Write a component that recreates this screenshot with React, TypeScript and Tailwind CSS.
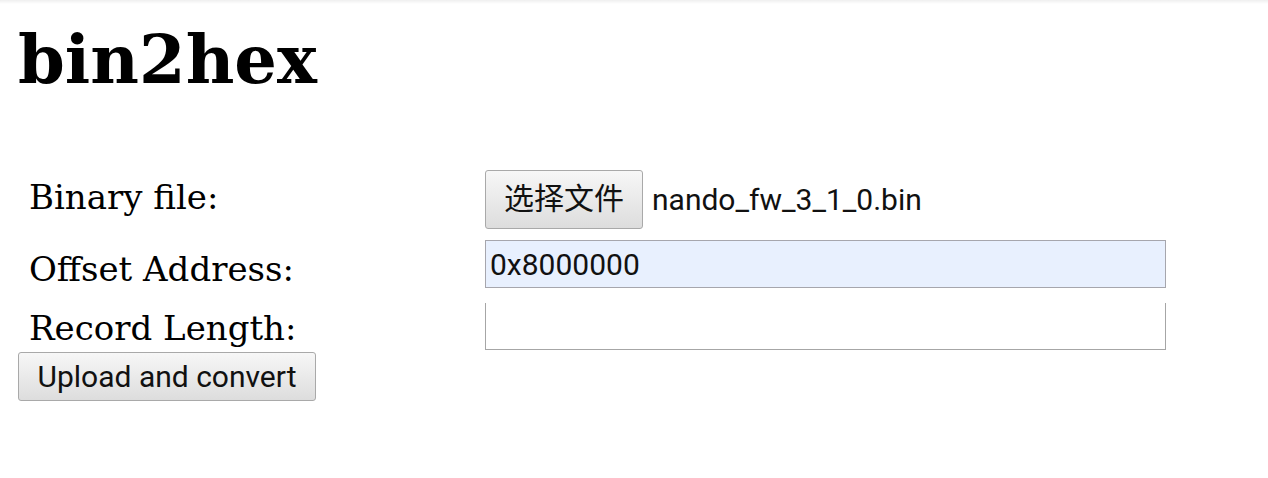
export default function App() {
  return (
    <div className="relative w-[1268px] h-[478px] bg-white text-black overflow-hidden">
      <div className="h-[4px] bg-gradient-to-b from-[#efefef] to-white" />
      <h1 className="ml-[18px] mt-[16px] text-[67px] leading-[80px] font-bold font-['DejaVu_Serif','Liberation_Serif',serif]">
        bin2hex
      </h1>
      <div className="ml-[18px] mt-[66px]">
        <div className="grid grid-cols-[467px_681px] items-center font-['DejaVu_Serif','Liberation_Serif',serif] text-[34px]">
          <div className="pl-[11px] leading-[50px] pb-[10px]">Binary file:</div>
          <div className="flex items-center h-[72px] pb-[6px] font-['Roboto','Noto_Sans_CJK_SC',sans-serif]">
            <button className="h-[59px] w-[158px] border border-[#a9a9a9] rounded-[3px] bg-gradient-to-b from-[#f7f7f7] to-[#dddddd] text-[30px] leading-none text-[#111]">
              选择文件
            </button>
            <span className="ml-[9px] text-[30px] text-[#111]">nando_fw_3_1_0.bin</span>
          </div>
          <div className="pl-[11px] leading-[50px]">Offset Address:</div>
          <div className="h-[62px] flex items-start pt-[2px]">
            <div className="w-[681px] h-[48px] border border-[#a6a6ad] bg-[#e8f0fe] pl-[4px] flex items-center text-[30px] text-[#111] font-['Roboto',sans-serif]">
              0x8000000
            </div>
          </div>
          <div className="pl-[11px] leading-[50px] mt-[3px]">Record Length:</div>
          <div className="h-[47px] -mt-[1px] w-[681px] border-x border-b border-[#a6a6a6] bg-white" />
        </div>
        <button className="-mt-[1px] h-[49px] w-[298px] border border-[#a9a9a9] rounded-[3px] bg-gradient-to-b from-[#f7f7f7] to-[#dddddd] text-[30px] leading-none text-[#111] font-['Roboto',sans-serif]">
          Upload and convert
        </button>
      </div>
    </div>
  );
}
